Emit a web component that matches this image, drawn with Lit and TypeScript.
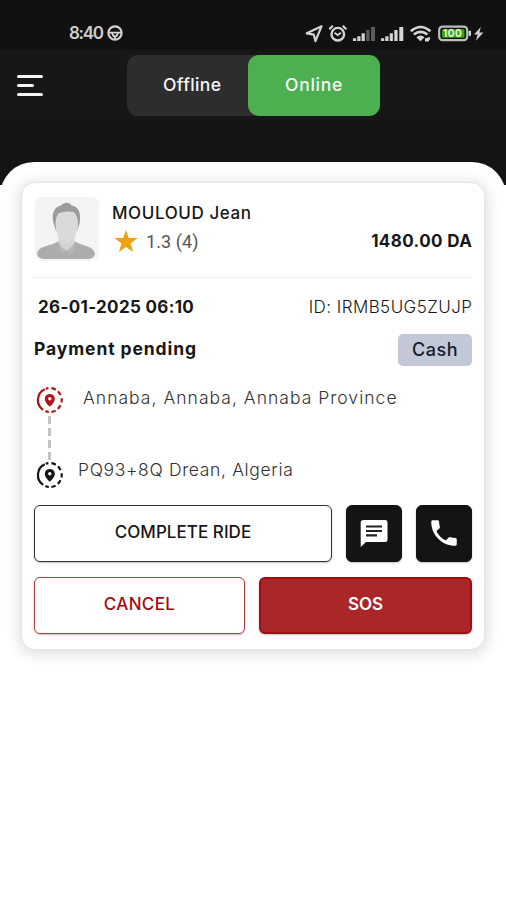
import { LitElement, html, css } from "lit";
import { customElement, property } from "lit/decorators.js";

@customElement("status-bar")
class StatusBar extends LitElement {
  static styles = css`
    :host { display: flex; height: 50px; box-sizing: border-box; padding: 16px 22px 0 69px; background: #111; justify-content: space-between; }
    .left { display: flex; align-items: center; gap: 5px; height: 35px; }
    .time { font: 600 17px/35px Inter, sans-serif; letter-spacing: -1.3px; color: #cfcfcf; width: 33px; white-space: nowrap; }
    svg { display: block; }
    .right { height: 34px; width: 180px; margin-right: -1px; }
    .pct { font: 700 10px Inter, sans-serif; letter-spacing: 0.5px; }
  `;
  render() {
    return html`
      <div class="left">
        <span class="time">8:40</span>
        <svg width="17" height="17" viewBox="0 0 17 17" fill="none" stroke="#d2d2d2" stroke-width="2.2">
          <circle cx="8" cy="8" r="6.6" /><path d="M1.5 7.7h13M5 8l1.5 3.2h3L11 8M8 11v3" stroke-width="1.8" />
        </svg>
      </div>
      <svg class="right" width="180" height="34" viewBox="305 16 180 34" fill="none" stroke="#d4d4d4" stroke-width="2">
        <path d="M321.6 26.2 306.8 33.3l7 1.4 1.6 6.4z" stroke-width="2.2" stroke-linejoin="round" />
        <circle cx="337.8" cy="34.2" r="6.3" stroke-width="2.4" />
        <path d="M329.3 29.3l3.5-3.5M346.3 29.3l-3.5-3.5" stroke-width="2.2" />
        <path d="M334.5 32.8l3.2 2.3 3.3-2.3" stroke-width="1.8" />
        <g stroke="none" fill="#d4d4d4">
          <path d="M353 38.3h3.2V41H353zM357.3 36.2h3.2V41h-3.2zM361.6 33.2h3.2V41h-3.2z" />
          <path fill="#5b5b5b" d="M366.2 30h3.3v11h-3.3zM371 27h4v14h-4z" />
          <path d="M381 38.3h3.2V41H381zM385.3 36.2h3.2V41h-3.2zM389.7 33.2h3.2V41h-3.2zM394.3 30h3.3v11h-3.3zM399.3 27h4v14h-4z" />
        </g>
        <path d="M410.8 31.2q9.8-8.4 19.6 0M413.8 34.6q6.8-5.6 13.6 0" stroke-width="2.6" />
        <path d="M416.3 37.2q4.5-3.4 8.2 0l-4.1 4z" fill="#d4d4d4" stroke="none" />
        <path d="M425 38.5l5-1.5v2l-1.5 2.5h-3.5z" fill="#d4d4d4" stroke="none" />
        <rect x="439.2" y="26.6" width="28" height="13.6" rx="3.4" stroke="#bdbdbd" stroke-width="2.2" />
        <rect x="442" y="29.3" width="22.5" height="8.4" rx="1" fill="#37a410" stroke="none" />
        <path d="M469.8 30.8v5" stroke-width="2.4" />
        <text class="pct" x="443" y="37.2" fill="#e6f6df" stroke="none">100</text>
        <path d="M480.8 27 474 34.4h3.6l-1.6 6.4 7.4-8.2h-4z" fill="#d0d0d0" stroke="none" />
      </svg>
    `;
  }
}

@customElement("availability-bar")
class AvailabilityBar extends LitElement {
  static styles = css`
    :host { display: flex; height: 72px; background: #171717; align-items: flex-start; box-sizing: border-box; padding: 5px 0 0 17px; border-bottom: 1px solid #111; }
    .menu { display: flex; flex-direction: column; gap: 6px; width: 110px; padding-top: 20px; }
    .menu i { height: 3px; width: 26px; border-radius: 1.5px; background: #f4f4f4; }
    .menu i.short { width: 17px; }
    .toggle { display: flex; width: 253px; height: 61px; border-radius: 11px; background: #2d2d2d; font: 500 17.5px/60px Inter, sans-serif; color: #f5f5f5; white-space: nowrap; }
    .off { width: 85px; padding-left: 36px; letter-spacing: 0.4px; }
    .on { width: 95px; padding-left: 37px; border-radius: 11px; background: #4caf50; letter-spacing: 0.75px; }
  `;
  render() {
    return html`
      <div class="menu"><i></i><i class="short"></i><i></i></div>
      <div class="toggle"><div class="off">Offline</div><div class="on">Online</div></div>
    `;
  }
}

@customElement("stop-pin")
class StopPin extends LitElement {
  @property() color = "#111";
  static styles = css`
    :host { display: block; width: 28px; height: 28px; }
    svg { display: block; }
  `;
  render() {
    return html`<svg width="28" height="28" viewBox="0 0 28 28" fill="none" stroke=${this.color} stroke-width="2.2">
      <path d="M8.8 3.2A11.9 11.9 0 0 0 7.1 23.8M9.4 25.1A11.9 11.9 0 0 0 12.8 26M9.8 2.8A11.9 11.9 0 0 1 12.4 2.2M15.4 2.2A11.9 11.9 0 0 1 19.8 3.7M22 5.4A11.9 11.9 0 0 1 24.6 9.1M25.6 12.2A11.9 11.9 0 0 1 25.5 16.6M24.5 19.3A11.9 11.9 0 0 1 21.8 22.9M19.6 24.6A11.9 11.9 0 0 1 15.4 26" />
      <path d="M13.8 7.9a5 5 0 0 0-5 5c0 3.7 5 7.6 5 7.6s5-3.900 5-7.600a5 5 0 0 0-5-5zm0 3.200a1.700 1.700 0 1 1 0 3.400 1.700 1.700 0 0 1 0-3.400z" fill=${this.color} fill-rule="evenodd" stroke="none" />
    </svg>`;
  }
}

@customElement("ride-card")
class RideCard extends LitElement {
  static styles = css`
    :host { display: block; box-sizing: border-box; width: 464px; height: 468px; padding: 14px 12px 0 12px; border: 1px solid #e4e4e4; border-radius: 14px; background: #fff; box-shadow: 0 2px 13px 3px rgba(0, 0, 0, 0.12); font-family: Inter, sans-serif; color: #171717; white-space: nowrap; }
    svg { display: block; }
    .rider { display: flex; height: 80px; border-bottom: 1px solid #f0f0f0; }
    .avatar { margin-left: 1px; width: 64px; height: 64px; flex: none; }
    .who { margin-left: 13px; flex: 1; }
    .name { font-size: 17px; font-weight: 500; line-height: 33px; }
    .rating { display: flex; align-items: center; height: 23px; gap: 8px; margin-left: 2px; }
    .score { font: 400 18px/24px Roboto, sans-serif; color: #555; letter-spacing: 0.1px; }
    .fare { font-size: 17px; font-weight: 700; line-height: 32px; padding-top: 28px; }
    .row { display: flex; justify-content: space-between; align-items: center; }
    .ref { height: 30px; margin-top: 14px; font-size: 17px; }
    .date { font-weight: 700; padding-left: 4px; }
    .ride-id { font-weight: 300; }
    .pay { height: 32px; margin-top: 12px; font-size: 17.5px; font-weight: 600; line-height: 30px; align-items: flex-start; }
    .cash { box-sizing: border-box; width: 74px; height: 32px; line-height: 31px; text-align: center; border-radius: 5px; background: #c3c8d6; color: #141a2c; font-weight: 500; }
    .stops { margin-top: 20px; height: 119px; font-size: 17.5px; font-weight: 300; color: #333; }
    .stop { display: flex; height: 28px; margin-left: 2px; }
    .track { width: 3px; height: 47px; margin-left: 14px; background: repeating-linear-gradient(#fff 0 2px, #c3c3c3 2px 10px, #fff 10px 12px); }
    .from { margin-left: 19px; line-height: 24px; }
    .to { margin-left: 14px; line-height: 17px; }
    .actions { display: flex; gap: 14px; margin-bottom: 15px; font-size: 17px; font-weight: 500; }
    .btn { flex: 1; box-sizing: border-box; height: 57px; border-radius: 6px; line-height: 53px; text-align: center; border: 1px solid #333; box-shadow: 0 1px 2px rgba(0, 0, 0, 0.25); }
    .icon { flex: none; width: 56px; background: #141414; display: flex; justify-content: center; align-items: flex-start; border-color: #111; }
    .chat { padding-top: 13px; }
    .call { padding-top: 10px; }
    .cancel { border-color: #b33a3e; color: #a4090f; }
    .sos { background: #aa2728; border: 2px solid #a30d10; color: #fff; font-weight: 600; line-height: 51px; }
    .s-name { letter-spacing: 0.6px; }
    .s-fare { letter-spacing: 0.4px; margin-right: -0.4px; }
    .s-date { letter-spacing: 0.33px; }
    .s-id { letter-spacing: 0.45px; margin-right: -0.45px; }
    .s-pay { font-weight: 700; letter-spacing: 0.9px; }
    .s-cash { font-size: 18px; letter-spacing: 0.5px; }
    .s-from { letter-spacing: 1.03px; }
    .s-to { letter-spacing: 0.65px; }
    .s-done { letter-spacing: 0.05px; }
    .s-cancel { letter-spacing: 0.35px; }
  `;
  render() {
    return html`
      <div class="rider">
        <svg class="avatar" viewBox="0 0 64 64">
          <rect width="64" height="64" rx="8" fill="#f4f4f4" />
          <path d="M2 57C4 48 14 50 23 44.5h17C49 50 58 48 60 57q-1 5-8 5H10q-7 0-8-5z" fill="#acacac" />
          <path d="M23.5 36v10q2 4.5 8 8 6-3.5 8-8V36z" fill="#d4d4d4" />
          <path d="M23 44.5q2 6 8.500 9l-3.500 4.500q-5-6-5-13.500zM40 44.500q-2 6-8.500 9l3.500 4.500q5-6 5-13.500z" fill="#b6b6b6" />
          <path d="M18.500 26C16 15 20 10 26 8.500q3-3.500 7-2.500 3 .5 3.500 2.500c7 1 10 7 8 18.500l-2.500 7H21z" fill="#9c9c9c" />
          <path d="M20.500 26q.5-6 2.500-9.500 8-3 16-1.500 3.500 4 4 11c0 12-5.500 20-11.500 20S20.500 38 20.500 26z" fill="#dadada" />
        </svg>
        <div class="who">
          <div class="name s-name">MOULOUD Jean</div>
          <div class="rating">
            <svg width="24" height="23" viewBox="0 0 24 23"><path fill="#eda411" d="M12 0l2.8 8.1H23.6l-7 5.3 2.5 8.6-7.1-5.1L4.9 22l2.5-8.6L.4 8.1h8.8z" /></svg>
            <span class="score">1.3 (4)</span>
          </div>
        </div>
        <div class="fare s-fare">1480.00 DA</div>
      </div>
      <div class="row ref"><span class="date s-date">26-01-2025 06:10</span><span class="ride-id s-id">ID: IRMB5UG5ZUJP</span></div>
      <div class="row pay"><span class="s-pay">Payment pending</span><span class="cash s-cash">Cash</span></div>
      <div class="stops">
        <div class="stop"><stop-pin color="#ad1519"></stop-pin><span class="from s-from">Annaba, Annaba, Annaba Province</span></div>
        <div class="track"></div>
        <div class="stop"><stop-pin color="#151515"></stop-pin><span class="to s-to">PQ93+8Q Drean, Algeria</span></div>
      </div>
      <div class="actions">
        <div class="btn s-done">COMPLETE RIDE</div>
        <div class="btn icon chat"><svg width="28" height="28" viewBox="0 0 28 28"><path fill="#fff" d="M3 1h22q2.5 0 2.5 2.5v17Q27.5 23 25 23H6l-5.3 5V3.5Q.7 1 3 1z" /><path d="M6 7.5h16M6 12h16M6 16.3h11" stroke="#222" stroke-width="2.2" /></svg></div>
        <div class="btn icon call"><svg width="34" height="34" viewBox="0 0 24 24"><path fill="#fff" d="M6.62 10.79c1.44 2.83 3.76 5.14 6.59 6.59l2.2-2.2c.27-.27.67-.36 1.02-.24 1.12.37 2.33.57 3.57.57.55 0 1 .45 1 1V20c0 .55-.45 1-1 1-9.39 0-17-7.61-17-17 0-.55.45-1 1-1h3.5c.55 0 1 .45 1 1 0 1.25.2 2.45.57 3.57.11.35.03.74-.25 1.02l-2.2 2.2z" /></svg></div>
      </div>
      <div class="actions">
        <div class="btn cancel s-cancel">CANCEL</div>
        <div class="btn sos">SOS</div>
      </div>
    `;
  }
}

@customElement("app-root")
class AppRoot extends LitElement {
  static styles = css`
    :host { display: flex; flex-direction: column; width: 506px; height: 900px; overflow: hidden; background: linear-gradient(#141414 0 185px, #fff 185px); }
    .gap { height: 40px; }
    .sheet { flex: 1; background: #fff; border-radius: 34px 34px 0 0; padding: 20px 0 0 21px; }
  `;
  render() {
    return html`
      <status-bar></status-bar>
      <availability-bar></availability-bar>
      <div class="gap"></div>
      <div class="sheet"><ride-card></ride-card></div>
    `;
  }
}
